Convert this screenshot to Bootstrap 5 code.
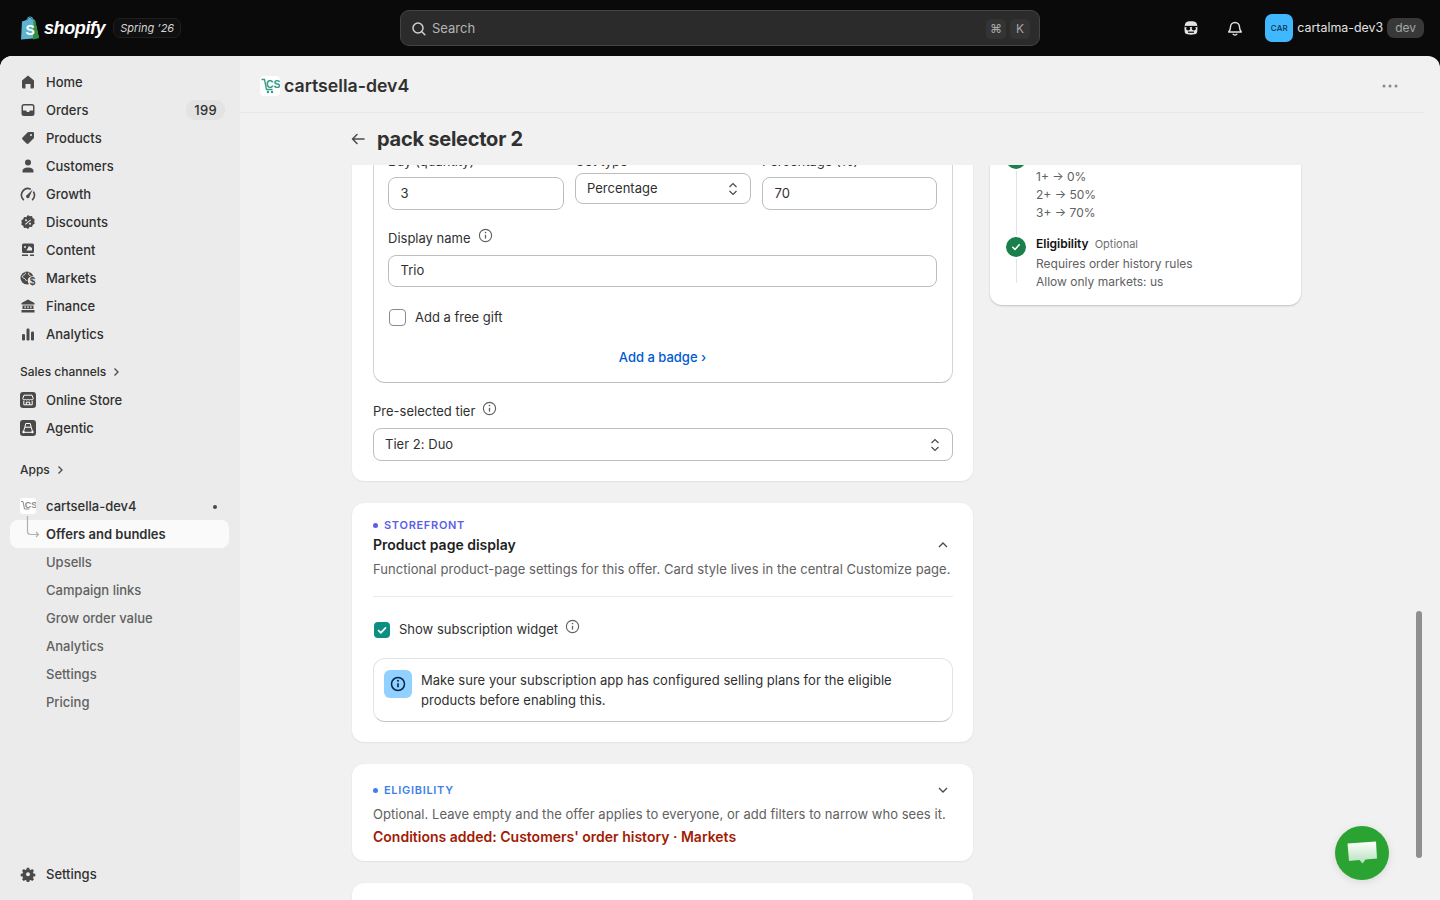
<!DOCTYPE html>
<html lang="en">
<head>
  <meta charset="UTF-8">
  <meta name="viewport" content="width=device-width, initial-scale=1">
  <title>pack selector 2</title>
  <link href="https://cdn.jsdelivr.net/npm/bootstrap@5.3.0/dist/css/bootstrap.min.css" rel="stylesheet">
  <style>
    html, body { height: 100%; overflow: hidden; }
    body { background: #0a0a0a; font-family: Inter, "Liberation Sans", sans-serif; font-size: 13px; color: #303030; }

    /* top bar */
    .topbar { height: 56px; padding: 0 16px 0 19px; }
    .brand-word { font-family: "Liberation Sans", sans-serif; font-weight: 700; font-style: italic; font-size: 18px; letter-spacing: -0.4px; color: #fff; margin-left: 3px; }
    .spring-tag { margin-left: 8px; height: 20px; padding: 0 6px; border: 1px solid #1f1f1f; border-radius: 7px; background: #101010; color: #d4d4d4; font-size: 11px; font-style: italic; line-height: 18px; }
    .top-left { width: 381px; }
    .search-box { width: 640px; height: 36px; background: #2b2b2b; border: 1px solid #434343; border-radius: 9px; padding: 1px 5px 0 10px; color: #b5b5b5; font-size: 13px; }
    .search-box .kbd-key { width: 20px; height: 20px; border-radius: 5px; background: #343434; color: #a8a8a8; font-size: 12px; line-height: 20px; text-align: center; }
    .search-word { margin-left: 1px; }
    .top-right { flex: 1; color: #e3e3e3; }
    .store-tile { width: 28px; height: 28px; border-radius: 7px; background: #40b8ff; color: #12324a; font-size: 8px; font-weight: 500; line-height: 28px; text-align: center; letter-spacing: .2px; }
    .store-name { font-size: 12.4px; font-weight: 400; color: #e3e3e3; margin-left: 4px; }
    .dev-tag { margin-left: 4px; background: #383838; color: #a6a6a6; border-radius: 7px; height: 20px; line-height: 20px; padding: 0 8px; font-size: 12px; }

    /* shell */
    .shell { height: 844px; border-radius: 12px 12px 0 0; overflow: hidden; background: #f1f1f1; }
    .side { width: 240px; flex: none; background: #ebebeb; padding-top: 12px; }
    .nav-line { height: 28px; margin: 0 11px 0 10px; padding: 2px 4px 0 10px; border-radius: 8px; font-size: 13px; font-weight: 500; color: #303030; }
    .nav-line svg { width: 16px; height: 16px; flex: none; margin: -2px 10px 0 0; fill: #4a4a4a; }
    .nav-line.sub { padding-left: 36px; color: #616161; font-weight: 450; }
    .nav-line.on { background: #fafafa; font-weight: 600; color: #303030; position: relative; }
    .count-pill { margin: -2px 0 0 auto; background: #e3e3e3; border-radius: 9px; height: 20px; line-height: 20px; padding: 0 8px; font-size: 13px; font-weight: 500; letter-spacing: .3px; color: #303030; }
    .nav-head { height: 28px; padding-left: 20px; font-size: 12px; font-weight: 500; color: #303030; }
    .nav-head svg { width: 10px; height: 10px; margin-left: 5px; }
    .nav-line svg.tree-mark { position: absolute; left: 16px; top: -4px; width: 14px; height: 24px; margin: 0; fill: none; }
    .side-bottom { margin-top: auto; margin-bottom: 12px; }
    .tiny-dot { margin-left: auto; margin-right: 8px; width: 4px; height: 4px; border-radius: 50%; background: #4a4a4a; }
    .icon-tile { width: 16px; height: 16px; border-radius: 3px; background: #fff; margin: -2px 10px 0 0; flex: none; }

    /* main */
    .main-area { flex: 1; min-width: 0; position: relative; }
    .app-bar { height: 57px; margin-right: 16px; padding: 4px 26px 0 20px; border-bottom: 1px solid #e8e8e8; }
    .app-tile { width: 20px; height: 20px; border-radius: 4px; background: #fff; margin-right: 4px; }
    .app-name { font-size: 17.7px; font-weight: 600; color: #303030; }
    .page-head { height: 52px; padding-left: 110px; }
    .page-title { font-size: 20px; font-weight: 700; color: #303030; margin: 0 0 0 11px; letter-spacing: -0.25px; }
    .scroll-clip { height: 735px; overflow: hidden; }
    .columns { margin: -60px 0 0 112px; gap: 17px; align-items: flex-start; }
    .col-left { width: 621px; flex: none; }
    .col-right { width: 311px; flex: none; }
    .panel { background: #fff; border-radius: 12px; box-shadow: 0 1px 2px rgba(0,0,0,.06), 0 0 2px rgba(0,0,0,.04); padding: 0 20px 0 21px; margin-bottom: 22px; }

    /* form bits */
    .tier-box { border: 1px solid #d4d4d4; border-radius: 12px; border-top: 0; border-bottom-color: #bdbdbd; padding: 0 15px 0 14px; height: 278px; }
    .field-label { font-size: 13px; color: #303030; display: block; margin: 0; line-height: 20px; }
    .field { height: 33px; border: 1px solid #bdbdbd; border-radius: 8px; padding: 0 11.5px; font-size: 13px; letter-spacing: .03px; color: #303030; background: #fff; }
    .field-select { height: 31px; padding: 0 12px 0 11px; }
    .field-full { padding: 0 12px 0 11px; }
    .field-select svg, .field-full svg { width: 10px; height: 14px; margin-left: auto; }
    .info-i { width: 15px; height: 15px; flex: none; margin-left: 7px; position: relative; top: -3px; }
    .plain-check { width: 17px; height: 17px; border: 1.5px solid #8a8a8a; border-radius: 4px; background: #fff; flex: none; }
    .link-blue { color: #005bd3; font-weight: 500; text-decoration: none; font-size: 13px; }
    .eyebrow { font-size: 11px; font-weight: 600; letter-spacing: .7px; line-height: 14px; }
    .eyebrow i { display: inline-block; width: 5px; height: 5px; border-radius: 50%; margin: 0 6px 1px 0; background: currentColor; vertical-align: middle; }
    .panel-title { font-size: 14px; font-weight: 600; margin: 0; line-height: 20px; color: #1f1f1f; }
    .muted-copy { font-size: 13px; color: #616161; line-height: 20px; letter-spacing: .04px; margin: 0; }
    .chev { width: 12px; height: 12px; }
    .rule-line { height: 1px; background: #ebebeb; }
    .teal-check { width: 16px; height: 16px; border-radius: 4px; background: #0b8f80; flex: none; }
    .note-box { border: 1px solid #e3e3e3; border-bottom-color: #c4c4c4; border-radius: 12px; height: 64px; padding: 11px 11px 0 10px; letter-spacing: .03px; }
    .note-icon { width: 28px; height: 28px; border-radius: 6px; background: #91d0ff; flex: none; margin-right: 9px; }
    .cond-red { font-size: 14px; font-weight: 600; color: #a11b05; line-height: 20px; margin: 0; }

    /* right card */
    .steps-card { background: #fff; border-radius: 12px; box-shadow: 0 1px 2px rgba(0,0,0,.2); height: 200px; padding-left: 16px; position: relative; }
    .step-dot { width: 20px; height: 20px; border-radius: 50%; background: #1a7f4b; flex: none; }
    .step-rail { width: 1px; background: #e3e3e3; margin-left: 9.5px; }
    .step-body { margin-left: 10px; }
    .step-copy { font-size: 12px; line-height: 18px; color: #616161; }
    .step-name { font-size: 12px; font-weight: 600; color: #111; line-height: 18px; }
    .step-opt { font-size: 11px; font-weight: 400; color: #707070; margin-left: 3px; }

    /* overlay */
    .bar-thumb { position: absolute; left: 1176px; top: 555px; width: 6px; height: 247px; border-radius: 3px; background: #8f8f8f; }
    .chat-bubble { position: absolute; left: 1095px; top: 770px; width: 54px; height: 54px; border-radius: 50%; background: #2aa332; box-shadow: 0 2px 8px rgba(0,0,0,.1); }
  </style>
</head>
<body>
  <header class="topbar d-flex align-items-center">
    <div class="top-left d-flex align-items-center">
      <svg width="22" height="24" viewBox="0 0 22 24"><path d="M3 5.500 7.500 4C8 1.500 9.500 .5 11 .5c1.500 0 3 1 3.500 3l1.500.5 4 18-18 1.500z" fill="#5fb3cf"/><path d="M14.500 4 16 4.400 20 22 14 23.500z" fill="#2f8f3e"/><path d="M8.500 3.600C9 2 10 1.400 11 1.400s2 .8 2.300 2.300" fill="none" stroke="#1f5a78" stroke-width="1"/><text x="6.500" y="19" font-family="Liberation Sans" font-weight="700" font-size="14" fill="#fff">S</text></svg>
      <span class="brand-word">shopify</span>
      <span class="spring-tag">Spring ’26</span>
    </div>
    <div class="search-box d-flex align-items-center">
      <svg width="16" height="16" viewBox="0 0 16 16" fill="none" stroke="#d0d0d0" stroke-width="1.500" class="me-1"><circle cx="7" cy="7" r="5"/><path d="m10.800 10.800 3 3" stroke-linecap="round"/></svg>
      <span class="search-word">Search</span>
      <span class="kbd-key ms-auto">⌘</span>
      <span class="kbd-key ms-1 me-1">K</span>
    </div>
    <div class="top-right d-flex align-items-center justify-content-end">
      <svg width="18" height="18" viewBox="0 0 18 18" style="margin-right:26px"><path d="M4 3.500C5 1.800 13 1.800 14 3.500c1.800 1 2 9.500 .5 11-1.500 1.500-9.500 1.500-11 0C2 13 2.200 4.500 4 3.500z" fill="#e3e3e3"/><path d="M2.500 7.500h13" stroke="#0a0a0a" stroke-width="1.200"/><circle cx="6.200" cy="9.500" r="2" fill="#0a0a0a"/><circle cx="11.800" cy="9.500" r="2" fill="#0a0a0a"/><path d="M6 13.200h6" stroke="#0a0a0a" stroke-width="1.200"/></svg>
      <svg width="18" height="18" viewBox="0 0 18 18" fill="none" stroke="#e3e3e3" stroke-width="1.400" style="margin-right:21px"><path d="M4.500 8a4.500 4.500 0 0 1 9 0c0 3 .9 4 1.800 5H2.700c.9-1 1.800-2 1.800-5z" stroke-linejoin="round"/><path d="M7.200 15.200c.5 1 3.100 1 3.600 0" stroke-linecap="round"/></svg>
      <span class="store-tile">CAR</span>
      <span class="store-name">cartalma-dev3</span>
      <span class="dev-tag">dev</span>
    </div>
  </header>

  <div class="shell d-flex">
    <nav class="side d-flex flex-column">
      <div class="nav-line d-flex align-items-center"><svg viewBox="0 0 16 16"><path d="M8 1.500 14 6.500V13a1.500 1.500 0 0 1-1.500 1.500H10.500V10h-5v4.500H3.500A1.500 1.500 0 0 1 2 13V6.500z"/></svg>Home</div>
      <div class="nav-line d-flex align-items-center"><svg viewBox="0 0 16 16"><path fill-rule="evenodd" d="M4 2h8a2.500 2.500 0 0 1 2.500 2.500v7A2.500 2.500 0 0 1 12 14H4a2.500 2.500 0 0 1-2.500-2.500v-7A2.500 2.500 0 0 1 4 2zm-1 6.500h3l1 1.500h2l1-1.500h3v-4A1 1 0 0 0 12 3.500H4a1 1 0 0 0-1 1z"/></svg>Orders<span class="count-pill">199</span></div>
      <div class="nav-line d-flex align-items-center"><svg viewBox="0 0 16 16"><path fill-rule="evenodd" d="M8.500 2H13a1 1 0 0 1 1 1v4.500a1.500 1.500 0 0 1-.5 1L8.500 13.500a1.500 1.500 0 0 1-2 0L2.500 9.500a1.500 1.500 0 0 1 0-2l5-5a1.500 1.500 0 0 1 1-.5zM11 6a1 1 0 1 0 0-2 1 1 0 0 0 0 2z"/></svg>Products</div>
      <div class="nav-line d-flex align-items-center"><svg viewBox="0 0 16 16"><circle cx="8" cy="4.500" r="3"/><path d="M2.500 14.500V13c0-2 2-3.500 5.500-3.500s5.500 1.500 5.500 3.500v1.500z"/></svg>Customers</div>
      <div class="nav-line d-flex align-items-center"><svg viewBox="0 0 16 16"><path d="M3.400 13.600A6.500 6.500 0 0 1 10.200 2.900M13.700 6.200a6.500 6.500 0 0 1-1.100 7.400" fill="none" stroke="#4a4a4a" stroke-width="1.600" stroke-linecap="round"/><path d="M12.600 3.600 9.600 10.200a1.800 1.800 0 1 1-2.300-1.500z"/></svg>Growth</div>
      <div class="nav-line d-flex align-items-center"><svg viewBox="0 0 16 16"><path fill-rule="evenodd" d="M8 1l1.800 1.300 2.200-.2.800 2.100 1.900 1.100-.5 2.200.5 2.200-1.900 1.100-.8 2.100-2.200-.2L8 15l-1.800-1.300-2.200.2-.8-2.100-1.900-1.100.5-2.200-.5-2.200 1.900-1.100.8-2.100 2.200.2zM6 5.200a1 1 0 1 0 0 2 1 1 0 0 0 0-2zm4 3.600a1 1 0 1 0 0 2 1 1 0 0 0 0-2zm.3-3.300L5 10l.7.700 5.300-4.500z"/></svg>Discounts</div>
      <div class="nav-line d-flex align-items-center"><svg viewBox="0 0 16 16"><path fill-rule="evenodd" d="M3.500 1.500h9A1.500 1.500 0 0 1 14 3v6.500a1.500 1.500 0 0 1-1.500 1.500h-9A1.500 1.500 0 0 1 2 9.500V3a1.500 1.500 0 0 1 1.500-1.500zM5 4a1 1 0 1 0 0 2 1 1 0 0 0 0-2zm4 0L6.500 8.500h5.500V6z"/><path d="M2 12.500h6V14H2zM10 12.500h4V14h-4z"/></svg>Content</div>
      <div class="nav-line d-flex align-items-center"><svg viewBox="0 0 16 16"><circle cx="7" cy="8" r="6.500"/><path d="M5 2.500C6.500 4 4 5 3 5.500s-1 2 .5 2.500 2 1.500 3 3M9 2.500c-1 1.500-.5 3 1.500 3" fill="none" stroke="#ebebeb" stroke-width="1"/><circle cx="12.300" cy="10.800" r="4.600" fill="#ebebeb"/><text x="9.700" y="15" font-size="10" font-weight="700" font-family="Liberation Sans" fill="#4a4a4a">$</text></svg>Markets</div>
      <div class="nav-line d-flex align-items-center"><svg viewBox="0 0 16 16"><path fill-rule="evenodd" d="M8 1.500 14.500 5v1.500h-13V5zM2.500 7.500h11V11h-11zM4.500 8.300v2h1.200v-2zM7.400 8.300v2h1.200v-2zM10.300 8.300v2h1.200v-2zM1.500 12h13v2.500h-13z"/></svg>Finance</div>
      <div class="nav-line d-flex align-items-center"><svg viewBox="0 0 16 16"><rect x="2" y="8" width="3" height="6.500" rx="1.200"/><rect x="6.500" y="2.500" width="3" height="12" rx="1.200"/><rect x="11" y="5.500" width="3" height="9" rx="1.200"/></svg>Analytics</div>

      <div class="nav-head d-flex align-items-center" style="margin-top:10px">Sales channels<svg viewBox="0 0 10 10" fill="none" stroke="#4a4a4a" stroke-width="1.300"><path d="m3.500 1.500 3.500 3.500-3.500 3.500"/></svg></div>
      <div class="nav-line d-flex align-items-center"><svg viewBox="0 0 16 16"><rect width="16" height="16" rx="3"/><path d="M4 3.200h8l1.200 3.300c-.2 1.800-2.200 1.800-2.600.6-.4 1.200-2.200 1.200-2.600 0-.4 1.200-2.200 1.200-2.600 0-.4 1.200-2.400 1.200-2.600-.6zM3.800 8.800v4h8.400v-4M6.300 12.800v-2.600h3.400v2.600" fill="none" stroke="#fff" stroke-width="1"/></svg>Online Store</div>
      <div class="nav-line d-flex align-items-center"><svg viewBox="0 0 16 16"><rect width="16" height="16" rx="3"/><path d="M5.800 3.500h4.400l1 3.700H4.800zM4.800 7.200l-1.300 4.300M11.200 7.200l1.300 4.300M4 12.300h8" fill="none" stroke="#fff" stroke-width="1"/><circle cx="3.500" cy="12" r="1.200" fill="#fff"/><circle cx="12.500" cy="12" r="1.200" fill="#fff"/></svg>Agentic</div>

      <div class="nav-head d-flex align-items-center" style="margin-top:14px">Apps<svg viewBox="0 0 10 10" fill="none" stroke="#4a4a4a" stroke-width="1.300"><path d="m3.500 1.500 3.500 3.500-3.500 3.500"/></svg></div>

      <div class="nav-line d-flex align-items-center" style="margin-top:8px">
        <span class="icon-tile d-flex align-items-center justify-content-center"><svg viewBox="0 0 16 16" style="margin:0;fill:none"><path d="M1 3.500h2l1.500 7.500h5" stroke="#8a8a8a" stroke-width="1"/><text x="4.800" y="9.500" font-size="9" font-weight="700" font-family="Liberation Sans" fill="#8a8a8a">CS</text></svg></span>cartsella-dev4<span class="tiny-dot"></span>
      </div>
      <div class="nav-line sub on d-flex align-items-center">
        <svg class="tree-mark" viewBox="0 0 14 24"><path d="M1.500 0v15.500a3 3 0 0 0 3 3h8m-2.500-2.500 2.500 2.500-2.500 2.500" fill="none" stroke="#b0b0b0" stroke-width="1.200"/></svg>
        Offers and bundles
      </div>
      <div class="nav-line sub d-flex align-items-center">Upsells</div>
      <div class="nav-line sub d-flex align-items-center">Campaign links</div>
      <div class="nav-line sub d-flex align-items-center">Grow order value</div>
      <div class="nav-line sub d-flex align-items-center">Analytics</div>
      <div class="nav-line sub d-flex align-items-center">Settings</div>
      <div class="nav-line sub d-flex align-items-center">Pricing</div>

      <div class="nav-line side-bottom d-flex align-items-center"><svg viewBox="0 0 16 16"><path fill-rule="evenodd" d="M6.700 1h2.600l.4 2 1.300.6 1.800-1.100 1.800 1.800-1.100 1.800.6 1.300 2 .4v2.600l-2 .4-.6 1.300 1.100 1.800-1.800 1.800-1.800-1.100-1.300.6-.4 2H6.700l-.4-2-1.300-.6-1.800 1.100-1.800-1.800 1.100-1.800-.6-1.300-2-.4V7.800l2-.4.6-1.300-1.100-1.800 1.800-1.800L4.900 3.600 6.200 3zM8 6a2.200 2.200 0 1 0 0 4.400A2.200 2.200 0 0 0 8 6z" transform="translate(.8 .8) scale(.9)"/></svg>Settings</div>
    </nav>

    <main class="main-area d-flex flex-column">
      <div class="app-bar d-flex align-items-center flex-none">
        <span class="app-tile d-flex align-items-center justify-content-center"><svg width="20" height="20" viewBox="0 0 20 20"><path d="M1.500 3.500h3l2 10h6" fill="none" stroke="#2e9c86" stroke-width="1.300"/><circle cx="8" cy="16" r="1.200" fill="#2e9c86"/><circle cx="12" cy="16" r="1.200" fill="#2e9c86"/><text x="6" y="11.500" font-size="10.500" font-weight="700" font-family="Liberation Sans" fill="#2e9c86">CS</text></svg></span>
        <span class="app-name">cartsella-dev4</span>
        <svg class="ms-auto" width="16" height="4" viewBox="0 0 16 4" fill="#8a8a8a"><circle cx="2" cy="2" r="1.500"/><circle cx="8" cy="2" r="1.500"/><circle cx="14" cy="2" r="1.500"/></svg>
      </div>
      <div class="page-head d-flex align-items-center">
        <svg width="16" height="16" viewBox="0 0 16 16" fill="none" stroke="#4a4a4a" stroke-width="1.500" stroke-linecap="round" stroke-linejoin="round"><path d="M14 8H2.500M7 3.500 2.500 8 7 12.500"/></svg>
        <h1 class="page-title">pack selector 2</h1>
      </div>

      <div class="scroll-clip">
        <div class="columns d-flex">
          <div class="col-left">
            <section class="panel" style="height:376px">
              <div class="tier-box">
                <div class="d-flex" style="gap:11px;padding-top:46px;height:113px">
                  <div class="flex-fill" style="width:176px">
                    <label class="field-label" style="margin-bottom:6px">Buy (quantity)</label>
                    <div class="field d-flex align-items-center">3</div>
                  </div>
                  <div class="flex-fill" style="width:176px">
                    <label class="field-label" style="margin-bottom:2px">Get type</label>
                    <div class="field field-select d-flex align-items-center">Percentage
                      <svg viewBox="0 0 10 14" fill="none" stroke="#4a4a4a" stroke-width="1.200"><path d="m1.500 5 3.500-3.500L8.500 5M1.500 9l3.500 3.500L8.500 9"/></svg>
                    </div>
                  </div>
                  <div class="flex-fill" style="width:175px">
                    <label class="field-label" style="margin-bottom:6px">Percentage (%)</label>
                    <div class="field d-flex align-items-center">70</div>
                  </div>
                </div>
                <label class="field-label d-flex align-items-center" style="margin-top:10px;margin-bottom:7px">Display name
                  <svg class="info-i" viewBox="0 0 16 16" fill="none" stroke="#616161" stroke-width="1.200"><circle cx="8" cy="8" r="6.500"/><path d="M8 7.300v4" stroke-width="1.400"/><circle cx="8" cy="4.800" r=".9" fill="#616161" stroke="none"/></svg>
                </label>
                <div class="field d-flex align-items-center" style="height:32px">Trio</div>
                <div class="d-flex align-items-center" style="margin-top:21px;padding-left:1px">
                  <span class="plain-check"></span>
                  <span style="margin-left:9px">Add a free gift</span>
                </div>
                <div class="text-center" style="margin-top:20px"><a class="link-blue" href="#">Add a badge ›</a></div>
              </div>
              <label class="field-label d-flex align-items-center" style="margin-top:18px;margin-bottom:7px">Pre-selected tier
                <svg class="info-i" viewBox="0 0 16 16" fill="none" stroke="#616161" stroke-width="1.200"><circle cx="8" cy="8" r="6.500"/><path d="M8 7.300v4" stroke-width="1.400"/><circle cx="8" cy="4.800" r=".9" fill="#616161" stroke="none"/></svg>
              </label>
              <div class="field field-full d-flex align-items-center">Tier 2: Duo
                <svg viewBox="0 0 10 14" fill="none" stroke="#4a4a4a" stroke-width="1.200"><path d="m1.500 5 3.500-3.500L8.500 5M1.500 9l3.500 3.500L8.500 9"/></svg>
              </div>
            </section>

            <section class="panel" style="height:239px;padding-top:15px">
              <div class="eyebrow" style="color:#5c5fe6"><i></i>STOREFRONT</div>
              <div class="d-flex align-items-center justify-content-between" style="margin-top:3px">
                <h2 class="panel-title">Product page display</h2>
                <svg class="chev" style="margin-right:4px" viewBox="0 0 12 12" fill="none" stroke="#4a4a4a" stroke-width="1.300"><path d="m2 8 4-4 4 4"/></svg>
              </div>
              <p class="muted-copy" style="margin-top:4px">Functional product-page settings for this offer. Card style lives in the central Customize page.</p>
              <div class="rule-line" style="margin-top:17px"></div>
              <div class="d-flex align-items-center" style="margin-top:23px;padding-left:1px">
                <span class="teal-check d-flex align-items-center justify-content-center"><svg width="10" height="10" viewBox="0 0 10 10" fill="none" stroke="#fff" stroke-width="1.700" stroke-linecap="round" stroke-linejoin="round"><path d="m1.500 5.500 2.300 2.300 4.700-5"/></svg></span>
                <span style="margin-left:9px">Show subscription widget</span>
                <svg class="info-i" viewBox="0 0 16 16" fill="none" stroke="#616161" stroke-width="1.200"><circle cx="8" cy="8" r="6.500"/><path d="M8 7.300v4" stroke-width="1.400"/><circle cx="8" cy="4.800" r=".9" fill="#616161" stroke="none"/></svg>
              </div>
              <div class="note-box d-flex" style="margin-top:18px">
                <span class="note-icon d-flex align-items-center justify-content-center"><svg width="16" height="16" viewBox="0 0 16 16" fill="none" stroke="#00254a" stroke-width="1.500"><circle cx="8" cy="8" r="6.500"/><path d="M8 7.300v4" stroke-width="1.600"/><circle cx="8" cy="4.800" r="1" fill="#00254a" stroke="none"/></svg></span>
                <div style="line-height:20px">Make sure your subscription app has configured selling plans for the eligible<br>products before enabling this.</div>
              </div>
            </section>

            <section class="panel" style="height:97px;padding-top:19px">
              <div class="d-flex align-items-center justify-content-between">
                <div class="eyebrow" style="color:#3f7fe8"><i></i>ELIGIBILITY</div>
                <svg class="chev" style="margin-right:4px" viewBox="0 0 12 12" fill="none" stroke="#4a4a4a" stroke-width="1.300"><path d="m2 4 4 4 4-4"/></svg>
              </div>
              <p class="muted-copy" style="margin-top:7px">Optional. Leave empty and the offer applies to everyone, or add filters to narrow who sees it.</p>
              <p class="cond-red" style="margin-top:3px">Conditions added: Customers' order history · Markets</p>
            </section>

            <section class="panel" style="height:60px"></section>
          </div>

          <aside class="col-right">
            <div class="steps-card">
              <div class="d-flex" style="padding-top:44px;height:132px">
                <div class="d-flex flex-column">
                  <span class="step-dot"></span>
                  <span class="step-rail flex-fill" style="margin-top:2px;margin-bottom:2px"></span>
                </div>
                <div class="step-body step-copy" style="padding-top:19px">1+ → 0%<br>2+ → 50%<br>3+ → 70%</div>
              </div>
              <div class="d-flex" style="height:46px">
                <div class="d-flex flex-column">
                  <span class="step-dot d-flex align-items-center justify-content-center"><svg width="10" height="10" viewBox="0 0 10 10" fill="none" stroke="#fff" stroke-width="1.600" stroke-linecap="round" stroke-linejoin="round"><path d="m1.800 5.300 2.200 2.200 4.200-4.700"/></svg></span>
                  <span class="step-rail flex-fill" style="margin-top:2px"></span>
                </div>
                <div class="step-body">
                  <div class="step-name" style="margin-top:-2px;margin-bottom:2px">Eligibility <span class="step-opt">Optional</span></div>
                  <div class="step-copy">Requires order history rules<br>Allow only markets: us</div>
                </div>
              </div>
            </div>
          </aside>
        </div>
      </div>

      <div class="bar-thumb"></div>
      <div class="chat-bubble d-flex align-items-center justify-content-center">
        <svg width="32" height="27" viewBox="0 0 32 27"><defs><linearGradient id="chatFill" x1="0" y1="0" x2="0" y2="1"><stop offset="0" stop-color="#fff"/><stop offset="1" stop-color="#b5e0bb"/></linearGradient></defs><path d="M1.500 3.500 30 1.500l1 17-11.500 1-3 4-3-3.500L3 21z" fill="url(#chatFill)"/></svg>
      </div>
    </main>
  </div>

  <script src="https://cdn.jsdelivr.net/npm/bootstrap@5.3.0/dist/js/bootstrap.bundle.min.js"></script>
</body>
</html>
